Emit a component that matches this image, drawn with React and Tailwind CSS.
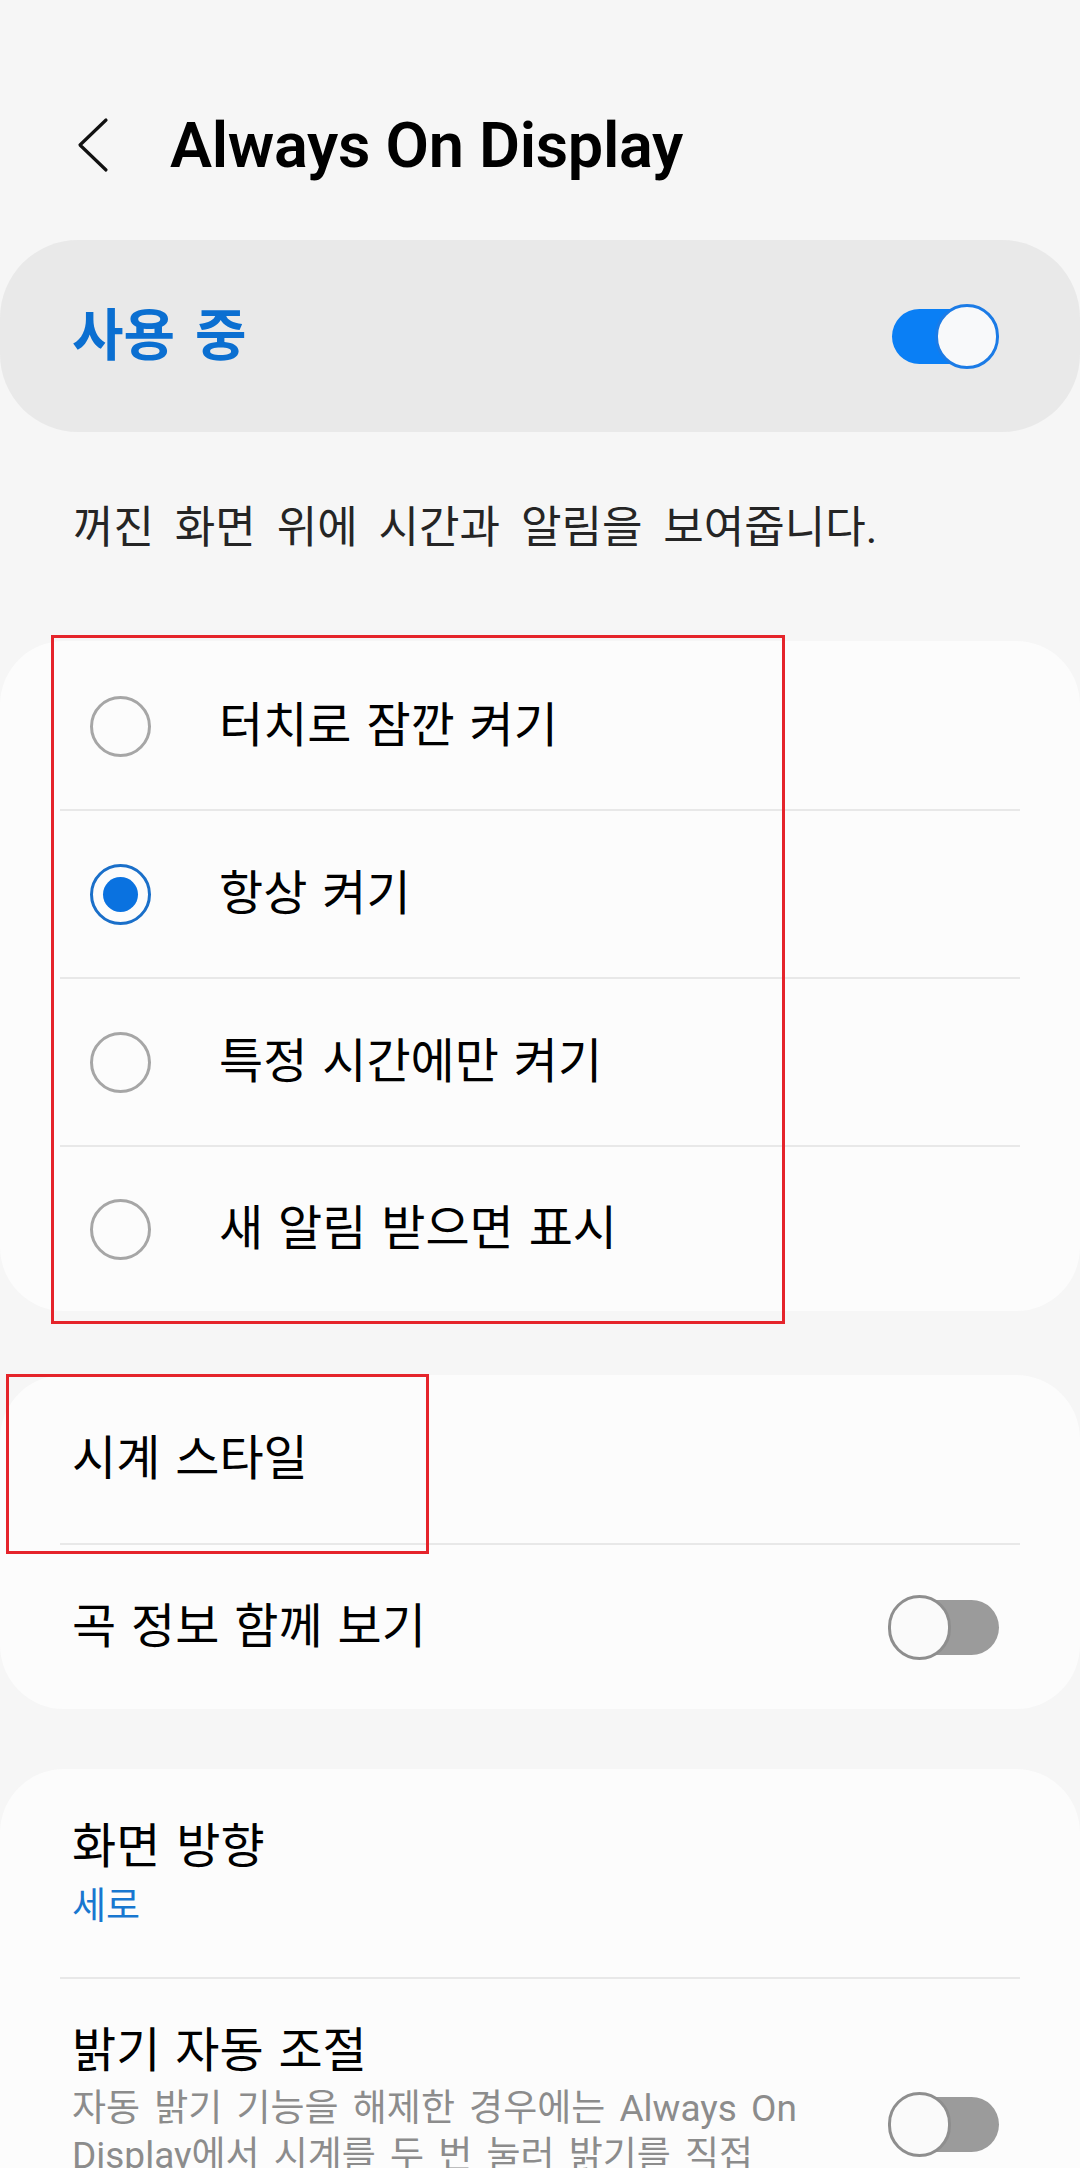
import { useState } from 'react';

// One UI style toggle
function Toggle({ on }) {
  return (
    <div className="relative w-[111px] h-[65px] shrink-0">
      <div
        className={
          on
            ? 'absolute left-[4px] right-[4px] top-[5px] bottom-[5px] rounded-full bg-[#0a7ff5]'
            : 'absolute left-[4px] right-0 top-[5px] bottom-[5px] rounded-full bg-[#9b9b9b]'
        }
      />
      <div
        className={
          on
            ? 'absolute right-0 top-0 w-[64px] h-[65px] rounded-full bg-[#f8f9fa] border-[3px] border-[#1b7be6]'
            : 'absolute left-0 top-0 w-[63px] h-[65px] rounded-full bg-[#fafafa] border-[3px] border-[#8e8e8e]'
        }
      />
    </div>
  );
}

function Radio({ checked }) {
  return checked ? (
    <div className="w-[61px] h-[61px] rounded-full border-[3px] border-[#1a6fc9] flex items-center justify-center shrink-0">
      <div className="w-[35px] h-[35px] rounded-full bg-[#0a72e0]" />
    </div>
  ) : (
    <div className="w-[61px] h-[61px] rounded-full border-[3px] border-[#a6a6a6] shrink-0" />
  );
}

function Divider() {
  return <div className="mx-[60px] h-[2px] bg-[#e8e8e8]" />;
}

const modes = ['터치로 잠깐 켜기', '항상 켜기', '특정 시간에만 켜기', '새 알림 받으면 표시'];

export default function App() {
  const [mode, setMode] = useState(1);

  return (
    <div
      className="relative w-[1080px] h-[2168px] overflow-hidden bg-[#f6f6f6] text-black"
      style={{ fontFamily: 'Roboto, "Noto Sans CJK KR", sans-serif' }}
    >
      {/* Header */}
      <div className="mt-[104px] h-[82px] flex items-center">
        <svg className="ml-[74px]" width="38" height="58" viewBox="0 0 38 58" fill="none">
          <path d="M32 4 L6 29 L32 54" stroke="#111" strokeWidth="3.2" strokeLinecap="round" strokeLinejoin="round" />
        </svg>
        <h1 className="ml-[58px] text-[63px] font-semibold leading-none tracking-[-0.3px]">Always On Display</h1>
      </div>

      {/* Master switch */}
      <div className="mt-[54px] h-[192px] rounded-[78px] bg-[#e9e9e9] flex items-center justify-between pl-[72px] pr-[81px]">
        <span className="text-[56px] leading-[64px] font-bold text-[#0b6fd1] [word-spacing:6px]">사용 중</span>
        <Toggle on />
      </div>

      <p className="mt-[68px] ml-[73px] text-[44px] leading-[56px] text-[#252525] whitespace-nowrap [word-spacing:10px]">
        꺼진 화면 위에 시간과 알림을 보여줍니다.
      </p>

      {/* Mode list */}
      <div className="mt-[85px] rounded-[64px] bg-[#fcfcfc] pt-[2px]">
        {modes.map((m, i) => (
          <div key={m}>
            <div
              onClick={() => setMode(i)}
              className={`${i === modes.length - 1 ? 'h-[164px]' : 'h-[166px]'} flex items-center pl-[90px]`}
            >
              <Radio checked={mode === i} />
              <span className="ml-[68px] text-[48px] leading-[60px] [word-spacing:3px]">{m}</span>
            </div>
            {i < modes.length - 1 && <Divider />}
          </div>
        ))}
      </div>

      {/* Clock style / music */}
      <div className="mt-[64px] rounded-[64px] bg-[#fcfcfc]">
        <div className="h-[168px] flex items-center px-[72px]">
          <span className="text-[48px] leading-[60px] [word-spacing:3px]">시계 스타일</span>
        </div>
        <Divider />
        <div className="h-[164px] flex items-center justify-between pl-[72px] pr-[81px]">
          <span className="text-[48px] leading-[60px] [word-spacing:3px]">곡 정보 함께 보기</span>
          <Toggle on={false} />
        </div>
      </div>

      {/* Orientation / brightness */}
      <div className="mt-[60px] rounded-[64px] bg-[#fcfcfc]">
        <div className="h-[208px] pt-[50px] px-[72px]">
          <div className="text-[48px] leading-[56px] [word-spacing:4px]">화면 방향</div>
          <div className="mt-[10px] text-[37px] leading-[44px] text-[#1877d0]">세로</div>
        </div>
        <Divider />
        <div className="pt-[44px] pb-[40px] pl-[72px] pr-[81px] flex items-center justify-between">
          <div>
            <div className="text-[48px] leading-[56px] [word-spacing:3px]">밝기 자동 조절</div>
            <div className="mt-[6px] text-[37px] leading-[47px] text-[#8c8c8c] [word-spacing:5px]">
              <span className="block whitespace-nowrap">자동 밝기 기능을 해제한 경우에는 Always On</span>
              <span className="block whitespace-nowrap">Display에서 시계를 두 번 눌러 밝기를 직접</span>
              <span className="block whitespace-nowrap">조절할 수 있습니다.</span>
            </div>
          </div>
          <Toggle on={false} />
        </div>
      </div>

      {/* Annotation boxes */}
      <div className="absolute left-[51px] top-[635px] w-[734px] h-[689px] border-[3px] border-[#e5242b] pointer-events-none" />
      <div className="absolute left-[6px] top-[1374px] w-[423px] h-[180px] border-[3px] border-[#e5242b] pointer-events-none" />
    </div>
  );
}
